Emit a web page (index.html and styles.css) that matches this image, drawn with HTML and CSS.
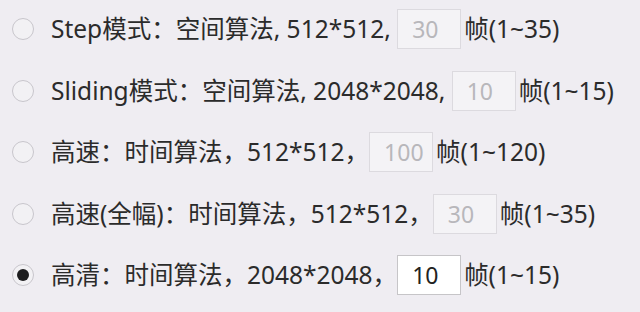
FILE: index.html
```html
<!DOCTYPE html>
<html lang="zh-CN">
<head>
<meta charset="utf-8">
<title>模式选择</title>
<link rel="stylesheet" href="styles.css">
</head>
<body>
<div class="options">
  <label class="option">
    <span class="radio"></span>
    <span class="label">Step模式：空间算法, 512*512, <input class="frames" type="text" value="30" disabled>帧(1~35)</span>
  </label>
  <label class="option">
    <span class="radio"></span>
    <span class="label">Sliding模式：空间算法, 2048*2048, <input class="frames" type="text" value="10" disabled>帧(1~15)</span>
  </label>
  <label class="option">
    <span class="radio"></span>
    <span class="label">高速：时间算法，512*512，<input class="frames" type="text" value="100" disabled>帧(1~120)</span>
  </label>
  <label class="option">
    <span class="radio"></span>
    <span class="label">高速(全幅)：时间算法，512*512，<input class="frames" type="text" value="30" disabled>帧(1~35)</span>
  </label>
  <label class="option">
    <span class="radio checked"></span>
    <span class="label">高清：时间算法，2048*2048，<input class="frames active" type="text" value="10">帧(1~15)</span>
  </label>
</div>
</body>
</html>
```

FILE: styles.css
```css
html, body {
  margin: 0;
  padding: 0;
  background: #efedf2;
}

body {
  width: 640px;
  height: 312px;
  overflow: hidden;
  font-family: "Noto Sans", "Noto Sans CJK SC", sans-serif;
  font-size: 24.5px;
  color: #2b2b2b;
}

.options {
  display: flex;
  flex-direction: column;
  gap: 21.5px;
  padding: 9px 0 0 12px;
}

.option {
  display: flex;
  align-items: center;
  height: 40px;
  white-space: nowrap;
}

.radio {
  box-sizing: border-box;
  width: 22px;
  height: 22px;
  border: 1.5px solid #c8c6cc;
  border-radius: 50%;
  background: #f2f1f4;
  margin-right: 17px;
  flex: none;
  display: flex;
  align-items: center;
  justify-content: center;
}

.radio.checked::after {
  content: "";
  width: 12px;
  height: 12px;
  border-radius: 50%;
  background: #1d1d1f;
}

.label {
  line-height: 40px;
}

.frames {
  box-sizing: border-box;
  width: 64px;
  height: 40px;
  margin: 0 3px 0 0;
  padding: 0 0 0 14px;
  vertical-align: top;
  font-family: "Noto Sans", sans-serif;
  font-size: 23px;
  color: #b8b7bb;
  background: #f4f3f6;
  border: 1px solid #dcdadf;
  border-radius: 0;
  outline: none;
}

.frames.active {
  color: #222222;
  background: #ffffff;
  border-color: #c6c5c8;
}
```
